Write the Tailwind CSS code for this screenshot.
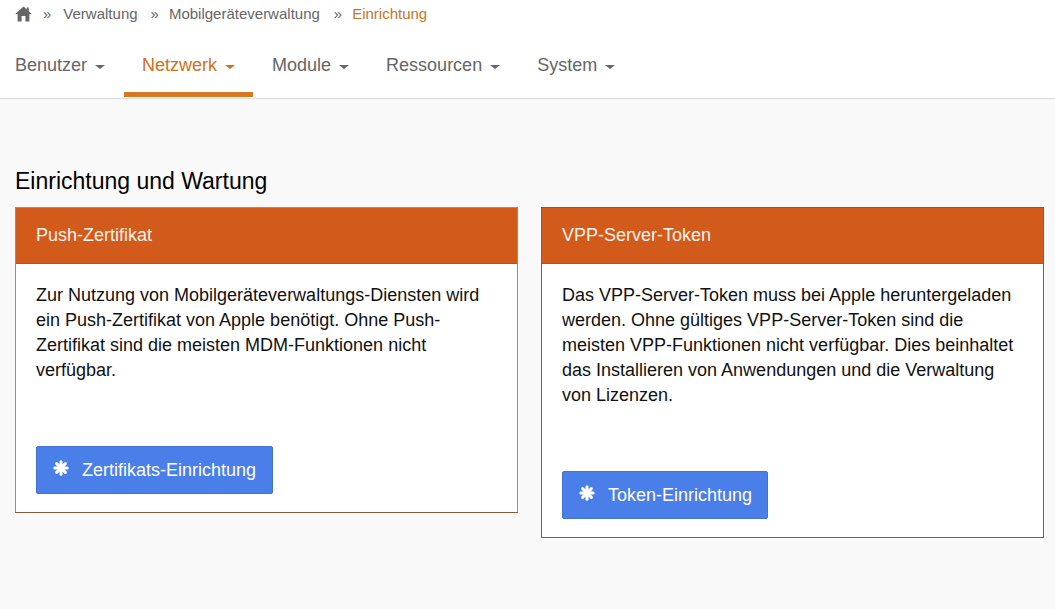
<!DOCTYPE html>
<html lang="de">
<head>
<meta charset="utf-8">
<title>Einrichtung</title>
<script src="https://cdn.jsdelivr.net/npm/@tailwindcss/browser@4"></script>
</head>
<body class="bg-[#f9f9f9] font-['Liberation_Sans',Arial,sans-serif] w-[1055px] h-[609px] overflow-hidden">
<div class="bg-white h-[99px] border-b border-[#dcdcdc] flex flex-col">
  <nav class="flex items-center h-[29px] pl-[15px] text-[15px] text-[#666666]">
    <svg class="w-[17px] h-[16px] mb-[1px] shrink-0" viewBox="0 0 17 16"><path fill="#666666" d="M8.5 0.5 L0.3 8 H2.6 V15.5 H6.6 V10 H10.4 V15.5 H14.4 V8 H16.7 L13.8 5.3 V1.5 H11.8 V3.5 Z"/></svg>
    <span class="ml-[11px] mr-[12px]">»</span>
    <span>Verwaltung</span>
    <span class="ml-[13px] mr-[10px]">»</span>
    <span>Mobilgeräteverwaltung</span>
    <span class="ml-[14px] mr-[10px]">»</span>
    <span class="text-[#c8761f]">Einrichtung</span>
  </nav>
  <div class="flex flex-1 text-[18px] text-[#666666] pl-[15px]">
    <div class="flex items-center gap-[8px] h-[68px] pt-[10px] border-b-[5px] border-transparent"><span>Benutzer</span><span class="w-0 h-0 border-x-[5px] border-x-transparent border-t-[4px] border-t-[#666666] mt-[2px]"></span></div>
    <div class="flex items-center gap-[8px] h-[68px] pt-[10px] ml-[19px] px-[18px] w-[129px] shrink-0 border-b-[5px] border-[#d5781f] text-[#d0701a]"><span>Netzwerk</span><span class="w-0 h-0 border-x-[5px] border-x-transparent border-t-[4px] border-t-[#d0701a] mt-[2px]"></span></div>
    <div class="flex items-center gap-[8px] h-[68px] pt-[10px] ml-[19px] border-b-[5px] border-transparent"><span>Module</span><span class="w-0 h-0 border-x-[5px] border-x-transparent border-t-[4px] border-t-[#666666] mt-[2px]"></span></div>
    <div class="flex items-center gap-[8px] h-[68px] pt-[10px] ml-[37px] border-b-[5px] border-transparent"><span>Ressourcen</span><span class="w-0 h-0 border-x-[5px] border-x-transparent border-t-[4px] border-t-[#666666] mt-[2px]"></span></div>
    <div class="flex items-center gap-[8px] h-[68px] pt-[10px] ml-[37px] border-b-[5px] border-transparent"><span>System</span><span class="w-0 h-0 border-x-[5px] border-x-transparent border-t-[4px] border-t-[#666666] mt-[2px]"></span></div>
  </div>
</div>
<main class="px-[15px]">
  <h1 class="text-[23px] leading-[28px] text-black mt-[68px] mb-[12px]">Einrichtung und Wartung</h1>
  <div class="flex items-start gap-[23px] w-[1030px]">
    <section class="w-[503px] shrink-0 h-[306px] border border-[#b5876a] border-b-[#8a5a3a] bg-white flex flex-col">
      <h2 class="bg-[#d25b1b] h-[56px] flex items-center px-[20px] text-[18px] text-[#fdf3ec] border-b border-[#b9531c]">Push-Zertifikat</h2>
      <div class="px-[20px] pt-[19px] text-[18px] leading-[25px] text-[#111111] flex flex-col flex-1">
        <p class="h-[163px]">Zur Nutzung von Mobilgeräteverwaltungs-Diensten wird ein Push-Zertifikat von Apple benötigt. Ohne Push-Zertifikat sind die meisten MDM-Funktionen nicht verfügbar.</p>
        <button class="w-[237px] h-[48px] bg-[#4a7ee8] border border-[#4571cf] rounded-[2px] text-white text-[18px] flex items-center pl-[16px]">
          <svg class="w-[16px] h-[16px] mr-[13px] mb-[4px] shrink-0" viewBox="0 0 16 16"><g fill="#ffffff"><circle cx="8" cy="8" r="3.4"/><rect x="6.5" y="0.3" width="3" height="15.4" rx="1.5"/><rect x="6.5" y="0.3" width="3" height="15.4" rx="1.5" transform="rotate(45 8 8)"/><rect x="6.5" y="0.3" width="3" height="15.4" rx="1.5" transform="rotate(90 8 8)"/><rect x="6.5" y="0.3" width="3" height="15.4" rx="1.5" transform="rotate(135 8 8)"/></g></svg>
          Zertifikats-Einrichtung</button>
      </div>
    </section>
    <section class="w-[503px] shrink-0 h-[331px] border border-[#8a5a3a] bg-white flex flex-col">
      <h2 class="bg-[#d25b1b] h-[56px] flex items-center px-[20px] text-[18px] text-[#fdf3ec] border-b border-[#b9531c]">VPP-Server-Token</h2>
      <div class="px-[20px] pt-[19px] text-[18px] leading-[25px] text-[#111111] flex flex-col flex-1">
        <p class="h-[188px]">Das VPP-Server-Token muss bei Apple heruntergeladen werden. Ohne gültiges VPP-Server-Token sind die meisten VPP-Funktionen nicht verfügbar. Dies beinhaltet das Installieren von Anwendungen und die Verwaltung von Lizenzen.</p>
        <button class="w-[206px] h-[48px] bg-[#4a7ee8] border border-[#4571cf] rounded-[2px] text-white text-[18px] flex items-center pl-[16px]">
          <svg class="w-[16px] h-[16px] mr-[13px] mb-[4px] shrink-0" viewBox="0 0 16 16"><g fill="#ffffff"><circle cx="8" cy="8" r="3.4"/><rect x="6.5" y="0.3" width="3" height="15.4" rx="1.5"/><rect x="6.5" y="0.3" width="3" height="15.4" rx="1.5" transform="rotate(45 8 8)"/><rect x="6.5" y="0.3" width="3" height="15.4" rx="1.5" transform="rotate(90 8 8)"/><rect x="6.5" y="0.3" width="3" height="15.4" rx="1.5" transform="rotate(135 8 8)"/></g></svg>
          Token-Einrichtung</button>
      </div>
    </section>
  </div>
</main>
</body>
</html>
